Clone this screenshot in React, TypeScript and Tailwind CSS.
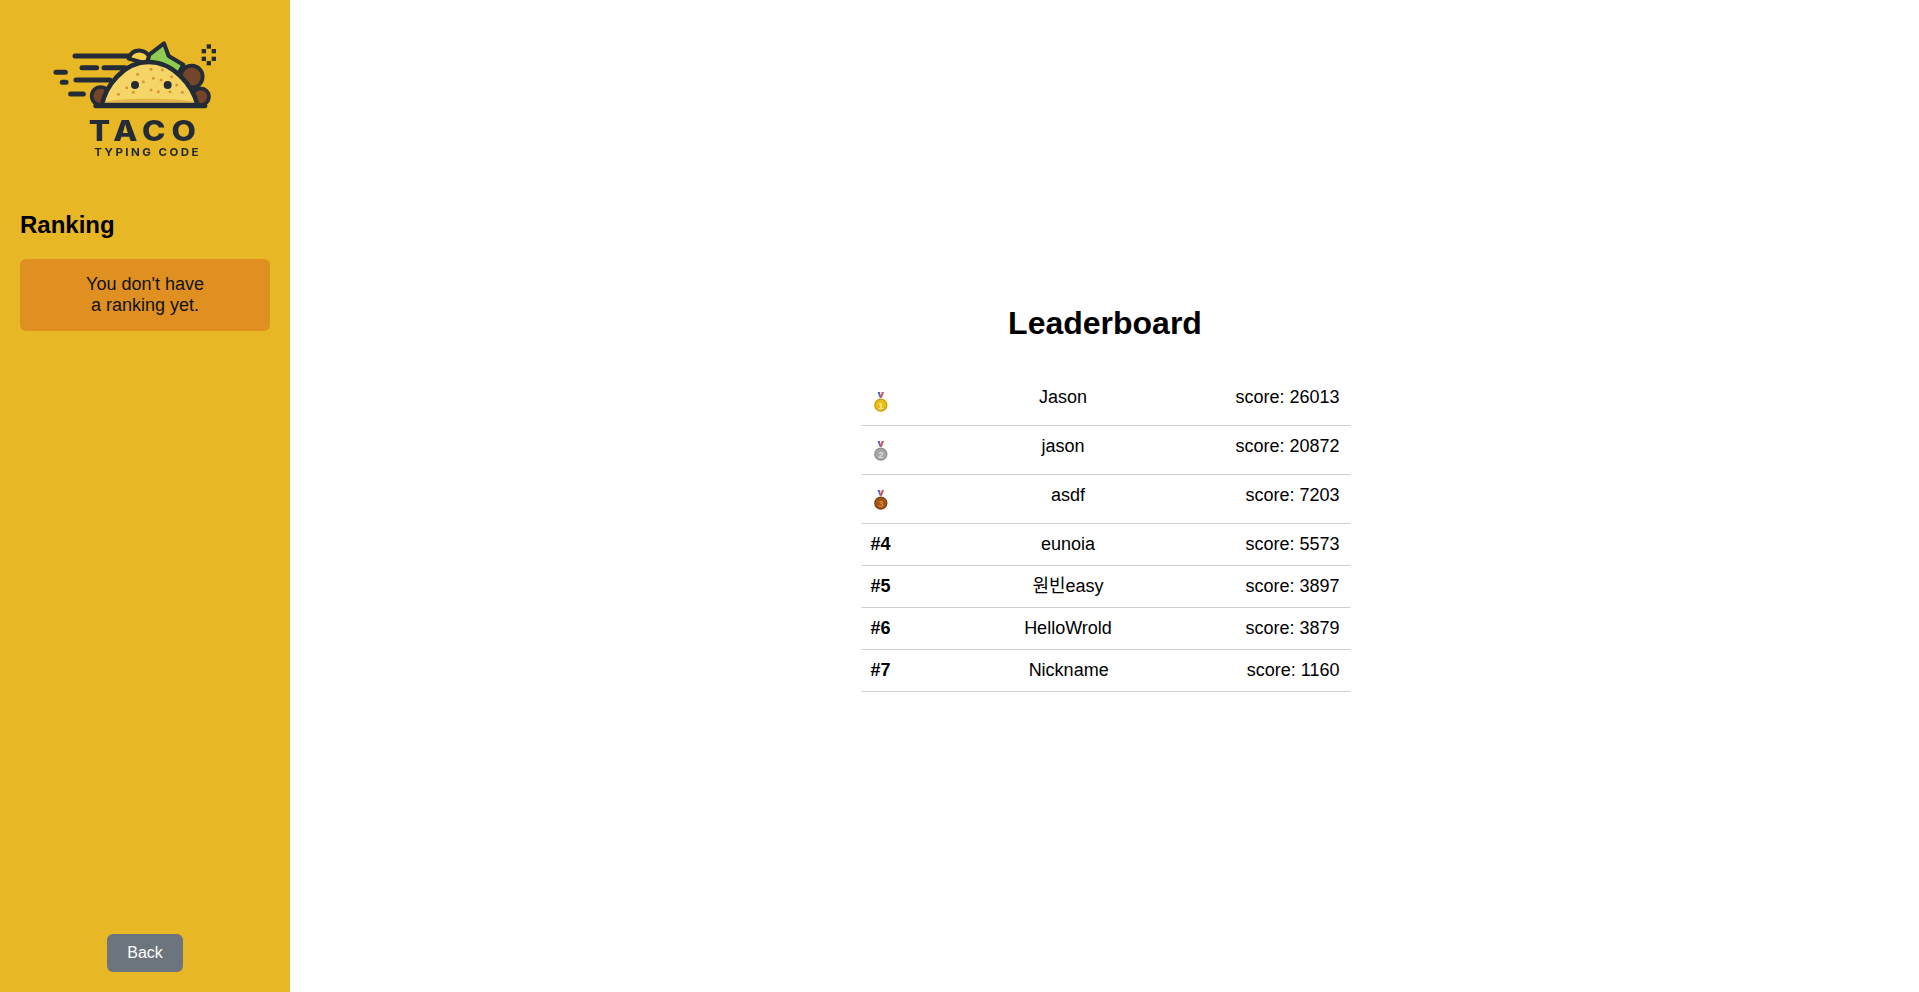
import React from 'react';

const FONT = "font-['Liberation_Sans','Noto_Sans_CJK_KR',sans-serif]";

const rows = [
  { rank: 1, name: 'Jason', score: 26013 },
  { rank: 2, name: 'jason', score: 20872 },
  { rank: 3, name: 'asdf', score: 7203 },
  { rank: 4, name: 'eunoia', score: 5573 },
  { rank: 5, name: '원빈easy', score: 3897 },
  { rank: 6, name: 'HelloWrold', score: 3879 },
  { rank: 7, name: 'Nickname', score: 1160 },
];

const MEDALS: Record<number, { fill: string; edge: string; digit: string }> = {
  1: { fill: '#EBBD16', edge: '#CC9A0C', digit: '#FBEFA8' },
  2: { fill: '#A6A6A6', edge: '#8E8E8E', digit: '#DDDDDD' },
  3: { fill: '#A05512', edge: '#7C400E', digit: '#D58A3A' },
};

const SPRINKLES = [
  [323, 163], [363, 148], [397, 150], [340, 185], [370, 175], [393, 180], [425, 170],
  [290, 203], [363, 210], [385, 215], [420, 215], [457, 217], [310, 217], [265, 223], [440, 195],
];

const Medal = ({ rank }: { rank: number }) => {
  const m = MEDALS[rank];
  return (
    <svg width="20" height="28" viewBox="0 0 20 28" className="block">
      <path d="M7 5h2.6l1.2 5.5-1.5.6z" fill="#4E6BC4" />
      <path d="M13.6 5h-2.6l-1.2 5.5 1.5.6z" fill="#D9534F" />
      <path d="M9.6 5h1.4l-.7 3.6z" fill="#F0F0F5" />
      <circle cx="10.3" cy="18.2" r="6.6" fill={m.edge} />
      <circle cx="10.3" cy="18.2" r="5.5" fill={m.fill} />
      <text x="10.3" y="21.6" textAnchor="middle" fontSize="9.5" fontWeight="700" fontFamily="Liberation Sans" fill={m.digit}>
        {rank}
      </text>
    </svg>
  );
};

const Logo = () => (
  <svg width="210" height="150" viewBox="0 0 630 450" className="block blur-[0.4px]">
    <g stroke="#232B36" strokeWidth="15" strokeLinecap="round" fill="none">
      <path d="M135 108H300" />
      <path d="M156 143H200" />
      <path d="M222 143H285" />
      <path d="M78 157H106" />
      <path d="M97 187H108" />
      <path d="M138 180H240" />
      <path d="M122 222H160" />
    </g>
    {/* bump behind the shell */}
    <path d="M296 116q8-26 36-24q18 2 26 18l-10 20z" fill="#F5D04A" stroke="#232B36" strokeWidth="12" strokeLinejoin="round" />
    {/* lettuce */}
    <path d="M358 104L402 70L416 108L460 134L440 170L350 135Z" fill="#8FCB50" stroke="#232B36" strokeWidth="12" strokeLinejoin="round" />
    {/* meat */}
    <g fill="#74452A" stroke="#232B36" strokeWidth="11">
      <circle cx="485" cy="170" r="33" />
      <circle cx="512" cy="230" r="25" />
      <circle cx="212" cy="228" r="27" />
    </g>
    {/* shell */}
    <path
      d="M216 254C226 200 280 126 356 126C430 126 488 196 502 254Z"
      fill="#F5D565"
      stroke="#232B36"
      strokeWidth="14"
      strokeLinejoin="round"
    />
    <path d="M222 248C240 232 470 232 496 248Z" fill="#E3B44C" />
    <path d="M196 258H526" stroke="#232B36" strokeWidth="13" strokeLinecap="round" />
    <circle cx="315" cy="195" r="12" fill="#232B36" />
    <circle cx="413" cy="195" r="12" fill="#232B36" />
    <g fill="#D8953A">
      {SPRINKLES.map(([cx, cy]) => (
        <circle key={`${cx}-${cy}`} cx={cx} cy={cy} r="4.5" />
      ))}
    </g>
    <g fill="#232B36">
      <rect x="530" y="73" width="13" height="13" />
      <rect x="515" y="87" width="13" height="13" />
      <rect x="545" y="87" width="13" height="13" />
      <rect x="515" y="110" width="13" height="13" />
      <rect x="545" y="110" width="13" height="13" />
      <rect x="530" y="123" width="13" height="13" />
    </g>
    <text
      x="176"
      y="363"
      fontFamily="Inter"
      fontWeight="800"
      fontSize="84"
      letterSpacing="16"
      textLength="340"
      lengthAdjust="spacingAndGlyphs"
      fill="#232B36"
    >
      TACO
    </text>
    <text
      x="193"
      y="407"
      fontFamily="Inter"
      fontWeight="700"
      fontSize="33"
      letterSpacing="7"
      textLength="320"
      lengthAdjust="spacingAndGlyphs"
      fill="#232B36"
    >
      TYPING CODE
    </text>
  </svg>
);

export default function App() {
  return (
    <div className={`flex h-[992px] overflow-hidden bg-white text-black ${FONT}`}>
      <aside className="flex w-[290px] shrink-0 flex-col bg-[#E8B725] px-5 pb-5">
        <div className="mt-5 ml-[10px]">
          <Logo />
        </div>
        <h2 className="mt-[41px] text-2xl leading-7 font-bold">Ranking</h2>
        <div className="mt-5 rounded-md bg-[#DF9020] py-[15px] text-center text-[18px] leading-[21px] text-[#111]">
          You don't have
          <br />
          a ranking yet.
        </div>
        <button className="mx-auto mt-auto h-[38px] w-[76px] rounded-md bg-[#6C757D] text-base text-white">Back</button>
      </aside>

      <main className="flex flex-1 items-center justify-center">
        <div className="w-[489px] translate-x-[0.5px]">
          <h1 className="mb-8 text-center text-[32px] leading-[44px] font-bold">Leaderboard</h1>
          <ul className="ml-[0.5px] w-[489px]">
            {rows.map((row) => (
              <li key={row.rank} className="flex justify-between border-b border-[#CCCCCC] py-[10px] pr-[10.5px] pl-[9.5px] text-[18px] leading-[21px]">
                {row.rank <= 3 ? <Medal rank={row.rank} /> : <span className="font-bold">#{row.rank}</span>}
                <span>{row.name}</span>
                <span>score: {row.score}</span>
              </li>
            ))}
          </ul>
        </div>
      </main>
    </div>
  );
}
